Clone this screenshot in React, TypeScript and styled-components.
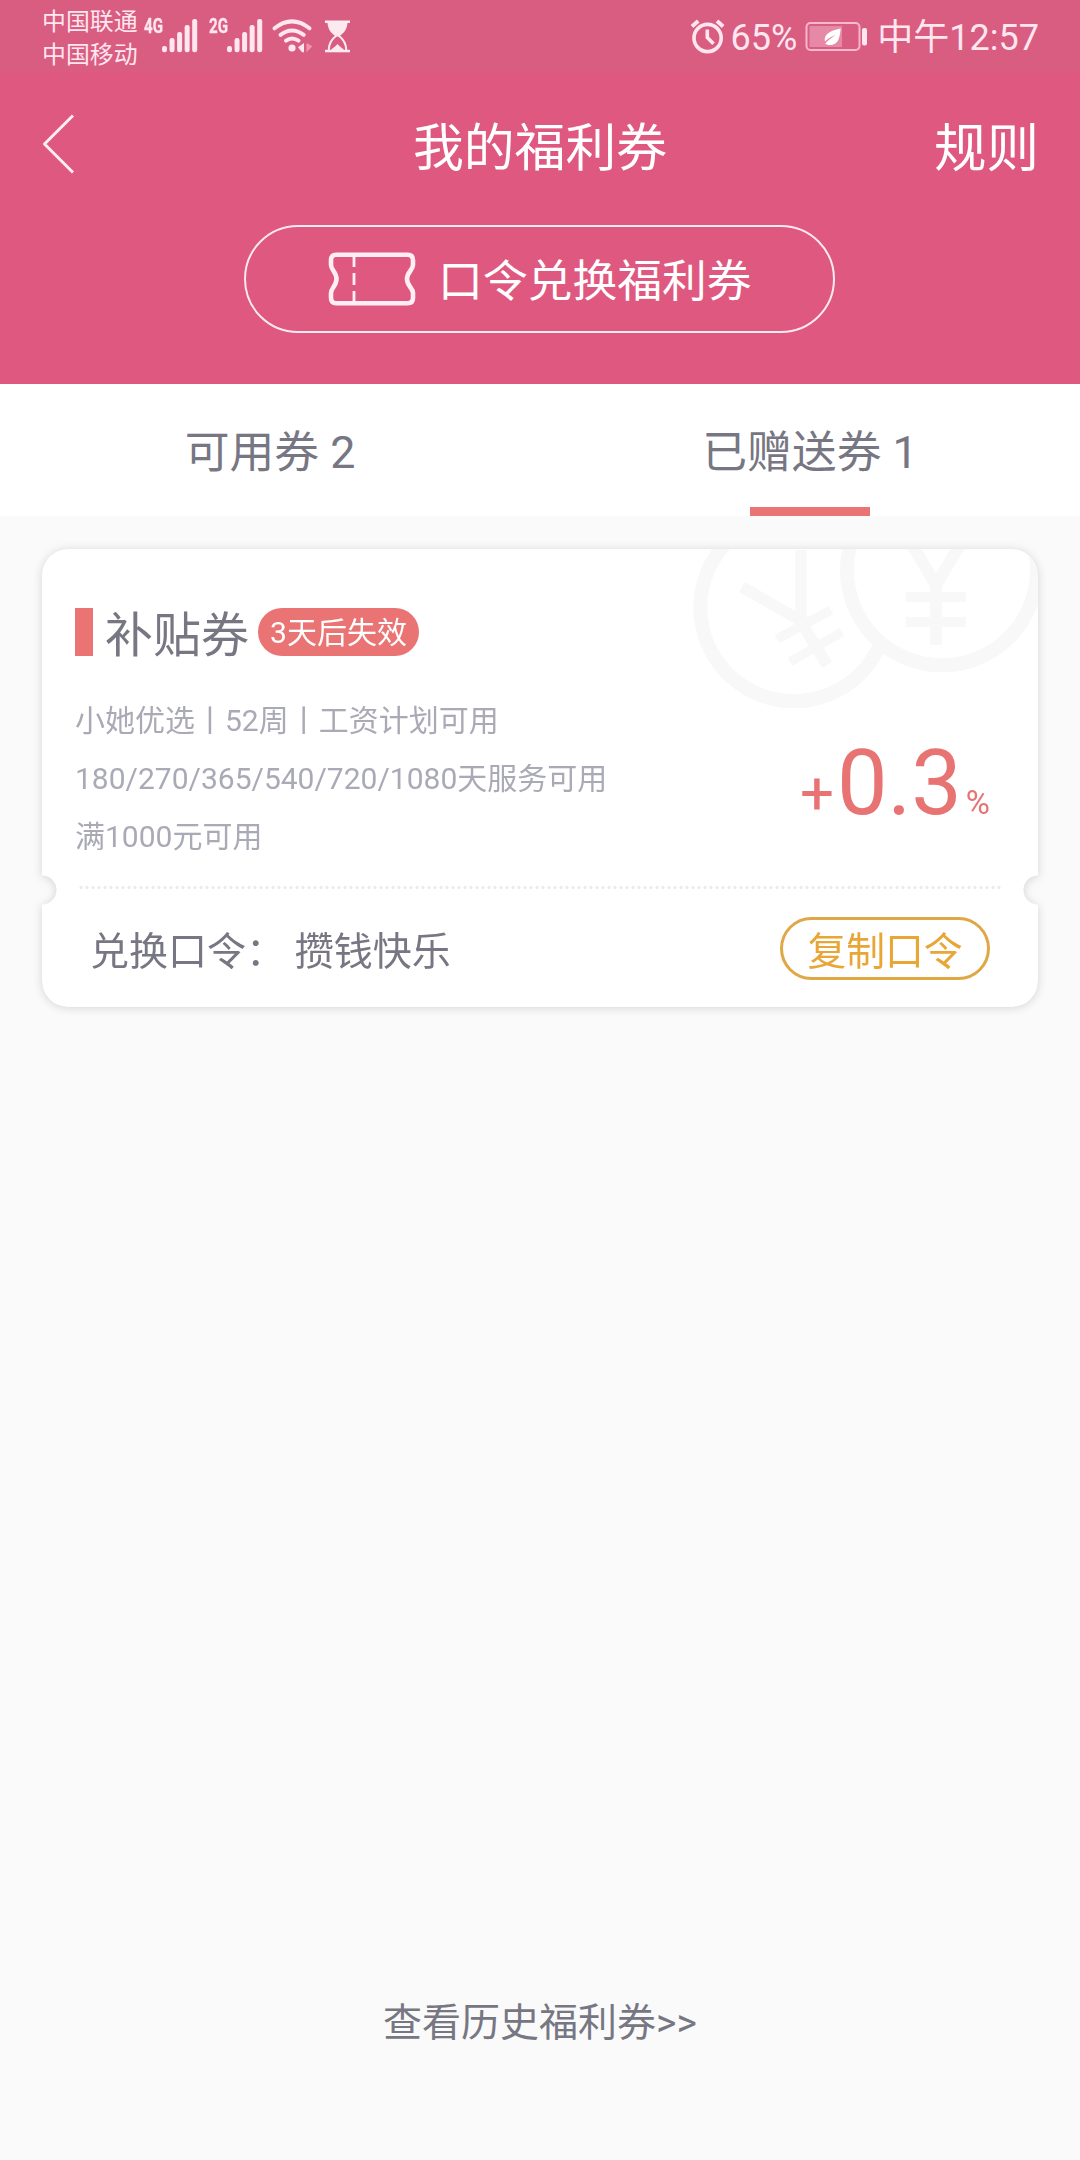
import React from "react";
import styled, { createGlobalStyle } from "styled-components";

const GlobalStyle = createGlobalStyle`
  * { box-sizing: border-box; }
  html, body { margin: 0; padding: 0; background: #fafafa; }
  body { font-family: Roboto, "Noto Sans CJK SC", sans-serif; }
`;

const Screen = styled.div`
  width: 1080px;
  height: 2160px;
  display: flex;
  flex-direction: column;
  background: #fafafa;
  color: #777683;
  overflow: hidden;
`;

const StatusBar = styled.header`
  height: 72px;
  display: flex;
  justify-content: space-between;
  align-items: flex-start;
  padding: 0 41px 0 42px;
  background: #d95c81;
  color: #ffe6ef;
`;

const StatusGroup = styled.div`
  display: flex;
  align-items: flex-start;
`;

const Carriers = styled.div`
  display: flex;
  flex-direction: column;
  width: 102px;
  padding-top: 6px;
  font-size: 23.9px;
  line-height: 33px;
  white-space: nowrap;
`;

const NetworkType = styled.span<{ $gap?: number }>`
  width: 18px;
  margin: 14px 0 0 ${(p) => p.$gap ?? 0}px;
  font-size: 21px;
  line-height: 25px;
  font-weight: 700;
  -webkit-text-stroke: 0.3px #ffe6ef;
  transform: scaleX(0.72);
  transform-origin: 0 50%;
`;

const StatusIcon = styled.svg<{ $gap?: number }>`
  display: block;
  flex: none;
  margin-left: ${(p) => p.$gap ?? 0}px;
`;

const StatusText = styled.span<{ $gap: number }>`
  margin: 17px 0 0 ${(p) => p.$gap}px;
  font-size: 36px;
  line-height: 42px;
  white-space: nowrap;
`;

const Hero = styled.section`
  height: 312px;
  display: flex;
  flex-direction: column;
  align-items: center;
  background: #df5880;
  color: #fff;
`;

const NavBar = styled.nav`
  align-self: stretch;
  height: 153px;
  display: grid;
  grid-template-columns: 200px 1fr 200px;
  align-items: center;
  padding: 0 42px;
`;

const BackButton = styled.button`
  display: block;
  width: 34px;
  height: 64px;
  padding: 0;
  margin-top: -9px;
  border: 0;
  background: none;
`;

const PageTitle = styled.h1`
  margin: 0;
  font-size: 50.8px;
  font-weight: 400;
  line-height: 60px;
  text-align: center;
`;

const RulesLink = styled.a`
  margin: 0 -1px 0 0;
  font-size: 52.5px;
  line-height: 60px;
  text-align: right;
`;

const RedeemButton = styled.button`
  width: 591px;
  height: 108px;
  display: flex;
  align-items: center;
  gap: 22px;
  padding: 0 0 0 82px;
  margin-right: 1px;
  border: 2px solid #ffe9f1;
  border-radius: 54px;
  background: none;
  color: #fff;
  font: 400 44.8px/52px Roboto, "Noto Sans CJK SC", sans-serif;
  white-space: nowrap;
`;

const RedeemLabel = styled.span`
  padding-top: 6px;
`;

const Tabs = styled.div`
  height: 132px;
  display: grid;
  grid-template-columns: 1fr 1fr;
  background: #fff;
`;

const Tab = styled.div<{ $active?: boolean }>`
  display: flex;
  flex-direction: column;
  align-items: center;
  justify-content: space-between;
  padding-top: 43px;
  font-size: 44.8px;
  line-height: 52px;

  &::after {
    content: "";
    width: 120px;
    height: 9px;
    background: ${(p) => (p.$active ? "#ea7373" : "transparent")};
  }
`;

const CardShadow = styled.div`
  margin: 33px 42px 0;
  filter: drop-shadow(0 1px 5px rgba(0, 0, 0, 0.15));
`;

const Card = styled.article`
  position: relative;
  height: 458px;
  display: flex;
  flex-direction: column;
  border-radius: 26px;
  overflow: hidden;
  background: #fff;
  mask:
    radial-gradient(circle at 0 341px, transparent 14px, #000 15px) left / 51% 100% no-repeat,
    radial-gradient(circle at 100% 341px, transparent 14px, #000 15px) right / 51% 100% no-repeat;
`;

const Coins = styled.svg`
  position: absolute;
  top: 0;
  right: 0;
`;

const CardTitle = styled.div`
  display: flex;
  align-items: center;
  height: 48px;
  margin: 59px 0 0 33px;

  &::before {
    content: "";
    width: 18px;
    height: 48px;
    background: #ea7373;
  }
`;

const CouponName = styled.h2`
  margin: 7px 0 0 12px;
  font-size: 48px;
  font-weight: 400;
  line-height: 56px;
`;

const ExpiryBadge = styled.span`
  height: 48px;
  margin-left: 9px;
  padding: 0 12px;
  border-radius: 24px;
  background: #ea7373;
  color: #fff;
  font-size: 30px;
  line-height: 50px;
`;

const CardBody = styled.div`
  display: flex;
  justify-content: space-between;
  height: 230px;
  margin: 0 48px 0 33px;
  padding-top: 36px;
`;

const Conditions = styled.div`
  color: #aaaab6;
  font-size: 30px;
  line-height: 58px;
  white-space: nowrap;
`;

const Rate = styled.div`
  display: flex;
  align-items: baseline;
  height: 106px;
  margin-top: 39px;
  color: #e87373;
  line-height: 106px;
`;

const RatePart = styled.span<{ $size: number; $gap?: number }>`
  font-size: ${(p) => p.$size}px;
  margin-left: ${(p) => p.$gap ?? 0}px;
`;

const Perforation = styled.div`
  height: 3px;
  margin: 0 37px 0 36px;
  background: radial-gradient(circle, #ebebeb 1.2px, transparent 1.9px) 0 0 / 6px 3px repeat-x;
`;

const CardFooter = styled.div`
  display: flex;
  justify-content: space-between;
  align-items: flex-start;
  padding: 28px 48px 0 48px;
`;

const Passphrase = styled.div`
  margin-top: 12px;
  font-size: 39px;
  line-height: 46px;
  white-space: pre;
`;

const CopyButton = styled.button`
  width: 210px;
  height: 63px;
  padding: 6px 0 0;
  border: 3px solid #e0a746;
  border-radius: 32px;
  background: none;
  color: #e8a636;
  font: 400 38.8px/51px Roboto, "Noto Sans CJK SC", sans-serif;
`;

const HistoryLink = styled.a`
  margin: auto 0 114px;
  font-size: 39px;
  line-height: 46px;
  text-align: center;
`;

const conditions = [
  "小她优选丨52周丨工资计划可用",
  "180/270/365/540/720/1080天服务可用",
  "满1000元可用",
];

function Signal() {
  const tops = [46, 38, 32, 25, 19];
  return (
    <StatusIcon width="36" height="72" fill="#ffe6ef">
      {tops.map((y, i) => (
        <rect key={y} x={i * 7.55} y={y} width="5" height={52.3 - y} rx="2.2" />
      ))}
    </StatusIcon>
  );
}

function Wifi() {
  return (
    <StatusIcon $gap={8} width="42" height="72" viewBox="270 0 42 72" fill="none" stroke="#ffe6ef" strokeWidth="4" strokeLinecap="round">
      <path d="M273.5 28.3Q291 14.5 308.5 28.3M279.5 34.8Q291 26.3 302.7 34.8M285 40.6Q291 36.3 297.5 40.6" />
      <circle cx="291" cy="48" r="3.6" fill="#ffe6ef" stroke="none" />
      <path d="M303 43V52.3H301L297 47.3Z" fill="#ffe6ef" stroke="none" />
      <path d="M305.5 43V52.3L311.5 46.3Z" fill="#f092b1" stroke="none" />
    </StatusIcon>
  );
}

function Hourglass() {
  return (
    <StatusIcon $gap={11} width="28" height="72" viewBox="324 0 28 72" fill="#fdeaf1">
      <path d="M325 20.5H350V23H347.5C347 29.5 344 33 339 36.5H336C331 33 328 29.5 327.5 23H325Z" />
      <path d="M336.5 35.5C331 39.5 328.7 43.5 328.7 50.5M338.5 35.5C344 39.5 346.3 43.5 346.3 50.5" fill="none" stroke="#fdeaf1" strokeWidth="2" />
      <path d="M325 49.8H350V52.3H325Z" />
      <path d="M331 50C332.5 48 335.5 46.5 337.5 44C339.5 46.5 342.5 48 344 50Z" />
    </StatusIcon>
  );
}

function Alarm() {
  return (
    <StatusIcon width="36" height="72" viewBox="690 0 36 72" fill="none" stroke="#ffe6ef" strokeWidth="3.6">
      <circle cx="707.6" cy="38" r="13.6" />
      <path d="M707.3 29.5V37.5L713.5 43.8" />
      <path d="M692 26.5L698.2 21M717 21L723.2 26.5" strokeWidth="4" />
    </StatusIcon>
  );
}

function Battery() {
  return (
    <StatusIcon $gap={8} width="64" height="72" viewBox="805 0 64 72" fill="none">
      <rect x="806.5" y="23" width="53" height="27" rx="4" stroke="#f7b7cd" strokeWidth="2" />
      <rect x="809.5" y="26" width="32.5" height="21" fill="#e589a6" />
      <rect x="862" y="28" width="5" height="17.5" rx="2" fill="#ffe6ef" />
      <path d="M840.7 28.5C833 30.2 823.5 33 825 41.5C829 38 832 36.5 836.3 34.6C832 37.5 827.5 40.5 825.3 43.7C829 46 836 45.5 838.5 39.5C840 36 840.3 32 840.7 28.5Z" fill="#fff" />
    </StatusIcon>
  );
}

function TicketIcon() {
  return (
    <svg width="88" height="56" viewBox="0 0 88 56" fill="none" stroke="#ffeff5" strokeWidth="4.6">
      <path d="M8 3.7H79.5Q85 3.7 85 9V14C85 19 79 21 79 28C79 35 85 37 85 42V47Q85 52.3 79.5 52.3H8Q3 52.3 3 47V42C3 37 8.500 35 8.5 28C8.5 21 3 19 3 14V9Q3 3.7 8 3.7Z" />
      <path d="M26 5V16M26 22V34M26 40V52" strokeWidth="2.8" />
    </svg>
  );
}

function CoinArt() {
  return (
    <Coins width="358" height="170" viewBox="680 549 358 170" fill="none" stroke="#f8f8f8">
      <circle cx="794" cy="607.5" r="93.7" strokeWidth="14" />
      <path d="M742 587L801.5 621M801 550V622L827 665" strokeWidth="11.5" />
      <path d="M777 639L831 610M790 662L842 632" strokeWidth="9.5" />
      <circle cx="942" cy="570.3" r="95" strokeWidth="14" fill="#fff" />
      <path d="M908 538L936 585L964 538M936 580V645" strokeWidth="12" />
      <path d="M905.7 597H966M905.7 622H966" strokeWidth="10" />
    </Coins>
  );
}

export default function App() {
  return (
    <>
      <GlobalStyle />
      <Screen>
        <StatusBar>
          <StatusGroup>
            <Carriers>
              <span>中国联通</span>
              <span>中国移动</span>
            </Carriers>
            <NetworkType>4G</NetworkType>
            <Signal />
            <NetworkType $gap={11}>2G</NetworkType>
            <Signal />
            <Wifi />
            <Hourglass />
          </StatusGroup>
          <StatusGroup>
            <Alarm />
            <StatusText $gap={5}>65%</StatusText>
            <Battery />
            <StatusText $gap={8}>中午12:57</StatusText>
          </StatusGroup>
        </StatusBar>

        <Hero>
          <NavBar>
            <BackButton aria-label="返回">
              <svg width="34" height="64" viewBox="0 0 34 64" fill="none" stroke="#ffeef4" strokeWidth="3">
                <path d="M31 3.5L2.5 32L31 60.5" strokeLinejoin="round" />
              </svg>
            </BackButton>
            <PageTitle>我的福利券</PageTitle>
            <RulesLink>规则</RulesLink>
          </NavBar>
          <RedeemButton>
            <TicketIcon />
            <RedeemLabel>口令兑换福利券</RedeemLabel>
          </RedeemButton>
        </Hero>

        <Tabs>
          <Tab>可用券 2</Tab>
          <Tab $active>已赠送券 1</Tab>
        </Tabs>

        <CardShadow>
          <Card>
            <CoinArt />
            <CardTitle>
              <CouponName>补贴券</CouponName>
              <ExpiryBadge>3天后失效</ExpiryBadge>
            </CardTitle>
            <CardBody>
              <Conditions>
                {conditions.map((text) => (
                  <div key={text}>{text}</div>
                ))}
              </Conditions>
              <Rate>
                <RatePart $size={60}>+</RatePart>
                <RatePart $size={90} $gap={3}>0.3</RatePart>
                <RatePart $size={33} $gap={4}>%</RatePart>
              </Rate>
            </CardBody>
            <Perforation />
            <CardFooter>
              <Passphrase>兑换口令： 攒钱快乐</Passphrase>
              <CopyButton>复制口令</CopyButton>
            </CardFooter>
          </Card>
        </CardShadow>

        <HistoryLink>查看历史福利券&gt;&gt;</HistoryLink>
      </Screen>
    </>
  );
}
